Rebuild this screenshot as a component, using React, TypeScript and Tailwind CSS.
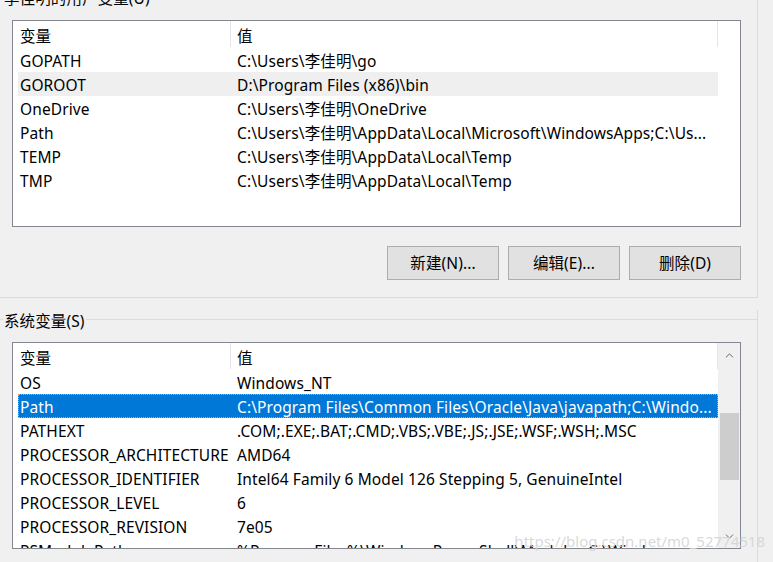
import { ChevronUp, ChevronDown } from "lucide-react"

type Row = { name: string; value: string; hover?: boolean; selected?: boolean }

const userVars: Row[] = [
  { name: "GOPATH", value: "C:\\Users\\李佳明\\go" },
  { name: "GOROOT", value: "D:\\Program Files (x86)\\bin", hover: true },
  { name: "OneDrive", value: "C:\\Users\\李佳明\\OneDrive" },
  { name: "Path", value: "C:\\Users\\李佳明\\AppData\\Local\\Microsoft\\WindowsApps;C:\\Us..." },
  { name: "TEMP", value: "C:\\Users\\李佳明\\AppData\\Local\\Temp" },
  { name: "TMP", value: "C:\\Users\\李佳明\\AppData\\Local\\Temp" },
]

const systemVars: Row[] = [
  { name: "OS", value: "Windows_NT" },
  { name: "Path", value: "C:\\Program Files\\Common Files\\Oracle\\Java\\javapath;C:\\Windo...", selected: true },
  { name: "PATHEXT", value: ".COM;.EXE;.BAT;.CMD;.VBS;.VBE;.JS;.JSE;.WSF;.WSH;.MSC" },
  { name: "PROCESSOR_ARCHITECTURE", value: "AMD64" },
  { name: "PROCESSOR_IDENTIFIER", value: "Intel64 Family 6 Model 126 Stepping 5, GenuineIntel" },
  { name: "PROCESSOR_LEVEL", value: "6" },
  { name: "PROCESSOR_REVISION", value: "7e05" },
  { name: "PSModulePath", value: "%ProgramFiles%\\WindowsPowerShell\\Modules;C:\\Windo..." },
]

function VarList({ rows, scroll }: { rows: Row[]; scroll?: boolean }) {
  return (
    <div className="ml-[12px] flex h-[207px] w-[729px] overflow-hidden border border-[#828790] bg-white">
      <div className="flex-1 overflow-hidden pl-[5px]">
        <div className="flex h-[27px] items-center pt-[2px]">
          <div className="w-[212px] pl-[2px]">变量</div>
          <div className="-mt-[2px] h-[26px] w-px self-start bg-[#e5e5e5]" />
          <div className="flex-1 pl-[6px]">值</div>
          <div className="-mt-[2px] h-[26px] w-px self-start bg-[#e5e5e5]" />
        </div>
        {rows.map((r) => (
          <div
            key={r.name}
            className={
              r.selected
                ? "flex h-[24px] items-center border border-dotted border-[#e8a060] bg-[#0078d7] pt-[2px] text-white"
                : r.hover
                  ? "flex h-[24px] items-center border border-transparent bg-[#efefef] pt-[2px]"
                  : "flex h-[24px] items-center border border-transparent pt-[2px]"
            }
          >
            <div className="w-[218px] whitespace-nowrap pl-[1px]">{r.name}</div>
            <div className="flex-1 whitespace-nowrap">{r.value}</div>
          </div>
        ))}
      </div>
      {scroll ? (
        <div className="flex w-[22px] flex-col items-center bg-[#f0f0f0]">
          <ChevronUp className="mt-[6px] h-[13px] w-[13px] text-[#606060]" strokeWidth={1.75} />
          <div className="mt-[51px] h-[67px] w-[19px] bg-[#cdcdcd]" />
          <div className="flex-1" />
          <ChevronDown className="mb-[5px] h-[13px] w-[13px] text-[#606060]" strokeWidth={1.75} />
        </div>
      ) : (
        <div className="w-[22px]" />
      )}
    </div>
  )
}

export default function App() {
  return (
    <div
      className="relative h-[562px] w-[773px] overflow-hidden bg-[#f0f0f0] text-[15.5px] leading-[20px] tracking-[0.1px] text-black"
      style={{ fontFamily: '"Noto Sans", "Noto Sans CJK SC", sans-serif' }}
    >
      <div className="-mt-[12px] h-[310px] w-[758px] border-r border-b border-[#dcdcdc]">
        <div className="h-[32px] pl-[4px]">李佳明的用户变量(U)</div>
        <VarList rows={userVars} />
        <div className="mt-[19px] flex justify-end gap-[9px] pr-[16px]">
          {["新建(N)...", "编辑(E)...", "删除(D)"].map((label) => (
            <button
              key={label}
              className="h-[34px] w-[112px] border border-[#adadad] bg-[#e1e1e1] text-[15.5px]"
            >
              {label}
            </button>
          ))}
        </div>
      </div>

      <div className="mt-[22px] h-[260px] w-[758px] border-r border-[#dcdcdc]">
        <div className="-mt-[10px] flex h-[20px] items-start">
          <div className="mt-[9px] w-[3px] border-t border-[#dcdcdc]" />
          <div className="px-[1px] pt-[1px]">系统变量(S)</div>
          <div className="mt-[9px] flex-1 border-t border-[#dcdcdc]" />
        </div>
        <div className="mt-[12px]">
          <VarList rows={systemVars} scroll />
        </div>
      </div>

      <div className="pointer-events-none absolute right-[8px] bottom-[11px] text-[15px] tracking-normal text-[#d4d4d4]/90">
        https://blog.csdn.net/m0_52774518
      </div>
    </div>
  )
}
